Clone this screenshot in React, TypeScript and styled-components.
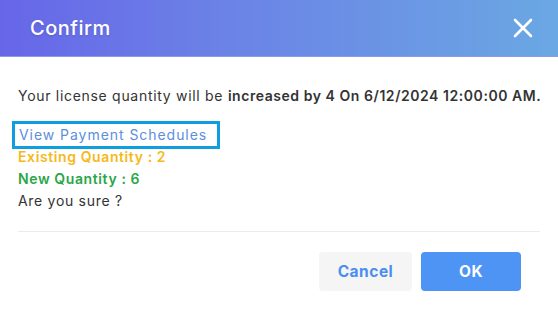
import React from "react";
import styled, { createGlobalStyle } from "styled-components";

const Global = createGlobalStyle`
  html, body { margin: 0; padding: 0; background: #ffffff; }
  body { font-family: "Inter", "Noto Sans", sans-serif; }
`;

const Dialog = styled.div`
  width: 558px;
  height: 325px;
  background: #ffffff;
  display: flex;
  flex-direction: column;
`;

const Header = styled.div`
  height: 57px;
  box-sizing: border-box;
  background: linear-gradient(90deg, #6766e8 0%, #6b82e6 40%, #6aa8e3 100%);
  border-bottom: 1px solid #8a9bec;
  display: flex;
  align-items: center;
  justify-content: space-between;
  padding: 0 24px 0 30px;
`;

const Title = styled.h1`
  margin: 0;
  color: #ffffff;
  font-size: 20px;
  font-weight: 500;
  letter-spacing: 0.5px;
  text-shadow: 0 1px 3px rgba(0, 0, 0, 0.12);
`;

const CloseButton = styled.button`
  border: 0;
  background: transparent;
  padding: 0;
  width: 22px;
  height: 22px;
  display: flex;
  align-items: center;
  justify-content: center;
  cursor: pointer;
`;

const Body = styled.div`
  padding: 28px 18px 0 18px;
  display: flex;
  flex-direction: column;
`;

const Line = styled.div<{ $color?: string; $bold?: boolean }>`
  font-size: 14px;
  line-height: 22px;
  color: ${(p) => p.$color || "#333333"};
  font-weight: ${(p) => (p.$bold ? 600 : 400)};
  letter-spacing: ${(p) => (p.$bold ? "0.6px" : "0.7px")};
  white-space: nowrap;
`;

const Strong = styled.b`
  font-weight: 600;
  letter-spacing: 0.55px;
`;

const LinkWrap = styled.div`
  margin-top: 16px;
  line-height: 22px;
`;

const ScheduleLink = styled.a`
  display: inline-block;
  font-size: 14px;
  line-height: 22px;
  letter-spacing: 0.95px;
  color: #5c8fdc;
  text-decoration: none;
  padding: 0 10px 0 4px;
  margin-left: -3px;
  outline: 3px solid #0f9fe0;
  cursor: pointer;
`;

const Divider = styled.hr`
  margin: 19px 0 0 0;
  border: 0;
  border-top: 1px solid #ebebeb;
`;

const Footer = styled.div`
  display: flex;
  justify-content: flex-end;
  gap: 9px;
  padding: 20px 37px 0 0;
`;

const Button = styled.button<{ $primary?: boolean }>`
  height: 39px;
  width: ${(p) => (p.$primary ? "100px" : "93px")};
  border: 0;
  border-radius: 4px;
  background: ${(p) => (p.$primary ? "#4d94f4" : "#f5f5f5")};
  color: ${(p) => (p.$primary ? "#ffffff" : "#4a8ef0")};
  font-family: "Inter", "Noto Sans", sans-serif;
  font-size: 15.5px;
  font-weight: 700;
  letter-spacing: 0.5px;
  cursor: pointer;
`;

export default function App() {
  return (
    <>
      <Global />
      <Dialog>
        <Header>
          <Title>Confirm</Title>
          <CloseButton aria-label="Close">
            <svg width="20" height="20" viewBox="0 0 20 20">
              <path d="M2 2 L18 18 M18 2 L2 18" stroke="#ffffff" strokeWidth="2.6" strokeLinecap="round" />
            </svg>
          </CloseButton>
        </Header>
        <Body>
          <Line>
            Your license quantity will be <Strong>increased by 4 On 6/12/2024 12:00:00 AM.</Strong>
          </Line>
          <LinkWrap>
            <ScheduleLink>View Payment Schedules</ScheduleLink>
          </LinkWrap>
          <Line $color="#f6b91a" $bold>Existing Quantity : 2</Line>
          <Line $color="#2aa647" $bold>New Quantity : 6</Line>
          <Line>Are you sure ?</Line>
          <Divider />
        </Body>
        <Footer>
          <Button>Cancel</Button>
          <Button $primary>OK</Button>
        </Footer>
      </Dialog>
    </>
  );
}
